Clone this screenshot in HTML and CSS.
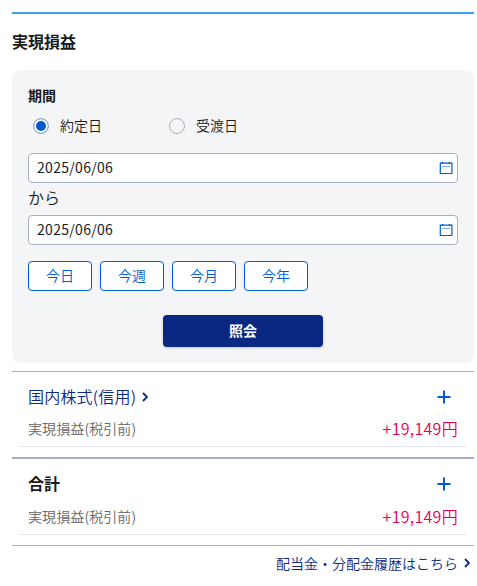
FILE: index.html
```
<!DOCTYPE html>
<html lang="ja">
<head>
    <meta charset="UTF-8">
    <meta name="viewport" content="width=device-width, initial-scale=1.0">
    <title>実現損益</title>
    <link rel="stylesheet" href="styles.css">
</head>
<body>
    <div class="container">
        <h1>実現損益</h1>

        <form class="search">
            <h2>期間</h2>
            <div class="radio-group">
                <label><input type="radio" name="date-type" checked><span>約定日</span></label>
                <label><input type="radio" name="date-type"><span>受渡日</span></label>
            </div>

            <div class="date-field">
                <input type="text" value="2025/06/06">
                <svg width="14" height="14" viewBox="0 0 14 14">
                    <path d="M1.3 2.2h11.6v10.3H1.3z M3.5 1v2 M10.5 1v2"/>
                    <path class="dots" d="M3.5 5.5h7"/>
                </svg>
            </div>
            <div class="from">から</div>
            <div class="date-field">
                <input type="text" value="2025/06/06">
                <svg width="14" height="14" viewBox="0 0 14 14">
                    <path d="M1.3 2.2h11.6v10.3H1.3z M3.5 1v2 M10.5 1v2"/>
                    <path class="dots" d="M3.5 5.5h7"/>
                </svg>
            </div>

            <div class="presets">
                <button type="button">今日</button>
                <button type="button">今週</button>
                <button type="button">今月</button>
                <button type="button">今年</button>
            </div>
            <button type="submit" class="submit">照会</button>
        </form>

        <div class="result">
            <div class="result-head">
                <a href="#">国内株式(信用)<svg class="arrow" width="6" height="10" viewBox="0 0 6 10"><path d="M1 1l4 4-4 4"/></svg></a>
                <svg class="plus" width="14" height="14" viewBox="0 0 14 14"><path d="M7 0.5v13M0.5 7h13"/></svg>
            </div>
            <div class="result-row">
                <span>実現損益(税引前)</span>
                <span class="amount">+19,149円</span>
            </div>
        </div>

        <div class="result total">
            <div class="result-head">
                <strong>合計</strong>
                <svg class="plus" width="14" height="14" viewBox="0 0 14 14"><path d="M7 0.5v13M0.5 7h13"/></svg>
            </div>
            <div class="result-row">
                <span>実現損益(税引前)</span>
                <span class="amount">+19,149円</span>
            </div>
        </div>

        <div class="history">
            <a href="#">配当金・分配金履歴はこちら<svg class="arrow" width="6" height="10" viewBox="0 0 6 10"><path d="M1 1l4 4-4 4"/></svg></a>
        </div>
    </div>
</body>
</html>
```
FILE: styles.css
```
* {
    box-sizing: border-box;
}
body {
    margin: 0;
    padding: 12px 3px 0 12px;
    background-color: #fff;
    color: #1a1a1a;
    font-family: "Noto Sans CJK JP", sans-serif;
    font-size: 14px;
    font-weight: 350;
    line-height: 20px;
}
.container {
    border-top: 2px solid #3ba3e8;
}
h1 {
    margin: 15px 0 17px;
    font-size: 16px;
    font-weight: 700;
    line-height: 24px;
}
h2 {
    margin: -1px 0 0;
    font-size: 14px;
    font-weight: 700;
    line-height: 20px;
}
a {
    display: inline-flex;
    align-items: center;
    color: #0a2882;
    text-decoration: none;
}
svg {
    fill: none;
    stroke: #005bd0;
}
.search {
    height: 293px;
    padding: 16px;
    background-color: #f4f5f7;
    border-radius: 8px;
}
.radio-group {
    display: flex;
    margin: 11px 0 17px 5px;
}
.radio-group label {
    display: flex;
    align-items: center;
    width: 136px;
    height: 20px;
}
.radio-group span {
    padding-bottom: 2px;
}
.radio-group input {
    appearance: none;
    width: 16px;
    height: 16px;
    margin: 0 11px 0 0;
    border: 1px solid #a5afc5;
    border-radius: 50%;
}
.radio-group input:checked {
    background: #005bd0;
    border-color: #a5afc5;
    box-shadow: inset 0 0 0 2px #fff;
}
.date-field {
    display: flex;
    align-items: center;
    height: 30px;
    padding: 0 4px 0 8px;
    background-color: #fff;
    border: 1px solid #a5afc5;
    border-radius: 4px;
}
.date-field input {
    flex: 1;
    min-width: 0;
    padding: 0 0 2px;
    border: 0;
    outline: 0;
    background: none;
    color: inherit;
    font: inherit;
    font-weight: 400;
    letter-spacing: 0.3px;
}
.date-field svg {
    stroke-width: 1.2;
}
.dots {
    stroke-dasharray: 1 1;
}
.from {
    height: 32px;
    line-height: 28px;
    font-size: 16px;
}
.presets {
    display: flex;
    gap: 8px;
    margin: 16px 0 24px;
}
button {
    padding: 0 0 2px;
    font: inherit;
}
.presets button {
    width: 64px;
    height: 30px;
    background-color: #fff;
    border: 1px solid #005bd0;
    border-radius: 4px;
    color: #005bd0;
}
.submit {
    display: block;
    width: 160px;
    height: 32px;
    margin: 0 auto;
    background-color: #0a2882;
    border: 0;
    border-radius: 4px;
    box-shadow: 0 1px 3px rgba(0,0,0,0.2);
    color: #fff;
    font-weight: 700;
}
.result {
    height: 86px;
    margin-top: 8px;
    padding: 13px 8px 0;
    border-top: 1px solid #a5afc5;
}
.result-head {
    display: flex;
    justify-content: space-between;
    align-items: center;
    height: 24px;
    padding: 0 15px 0 8px;
    font-size: 16px;
}
.result-head a {
    padding-bottom: 2px;
    letter-spacing: 0.2px;
}
.result-head .arrow {
    margin-top: 2px;
}
.result-head strong {
    padding-bottom: 3px;
    font-weight: 700;
}
.plus {
    stroke-width: 2;
}
.arrow {
    margin-left: 6px;
    stroke: #0a2882;
    stroke-width: 1.8;
}
.result-row {
    display: flex;
    justify-content: space-between;
    align-items: center;
    height: 38px;
    padding: 1px 8px 0;
    border-bottom: 1px solid #e5e7ef;
    color: #666;
    letter-spacing: 0.1px;
}
.amount {
    color: #e5004f;
    font-size: 16px;
    letter-spacing: 0.3px;
}
.total {
    height: 88px;
    margin-top: 0;
    border-top-width: 2px;
}
.total .result-row {
    height: 39px;
    padding-top: 2px;
}
.history {
    display: flex;
    justify-content: flex-end;
    height: 35px;
    padding: 0 4px 0 0;
    border-top: 1px solid #a5afc5;
}
```
